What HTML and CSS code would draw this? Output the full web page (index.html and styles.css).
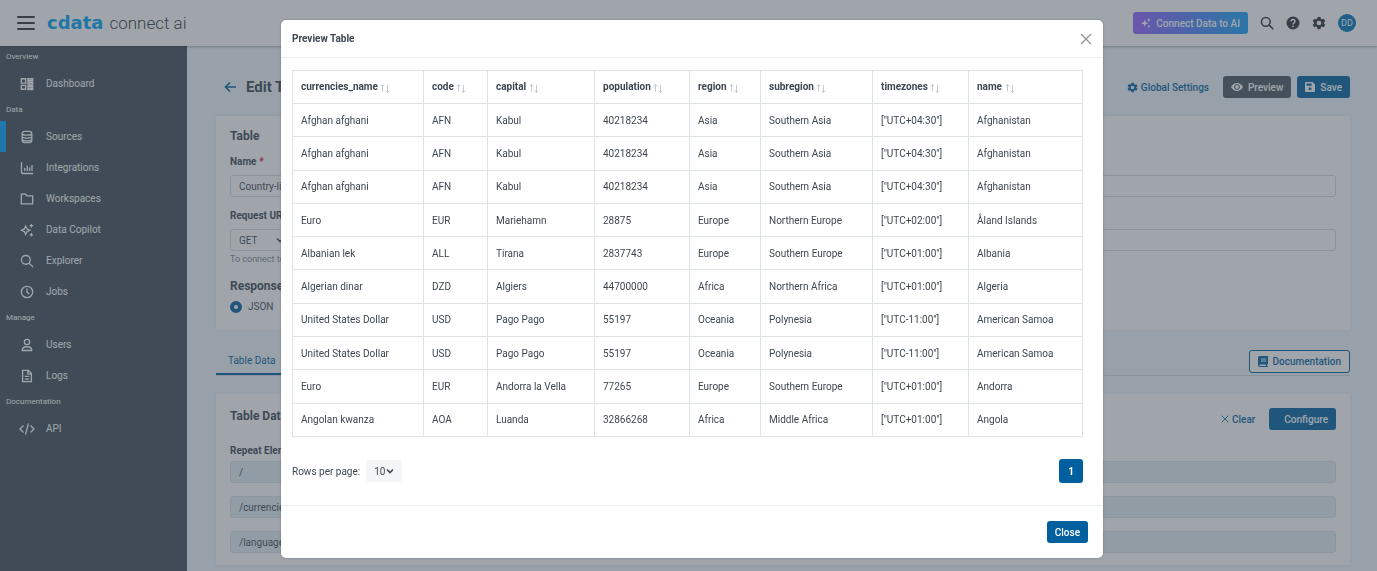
FILE: index.html
```
<!DOCTYPE html>
<html lang="en">
<head>
  <meta charset="UTF-8" />
  <meta name="viewport" content="width=device-width, initial-scale=1.0"/>
  <title>CData Connect AI</title>
  <link rel="stylesheet" href="styles.css">
</head>
<body>
  <!-- Shared icons -->
  <svg class="sprite" aria-hidden="true">
    <symbol id="i-gear" viewBox="0 0 24 24">
      <path fill="currentColor" fill-rule="evenodd" d="M9.5 1.5h5l.7 3.3 1.9 1.1 3.2-1.1 2.5 4.4-2.5 2.2v1.3l2.5 2.2-2.5 4.4-3.2-1.1-1.9 1.1-.7 3.2h-5l-.7-3.2-1.9-1.1-3.2 1.1-2.5-4.4 2.5-2.2v-1.3l-2.5-2.2 2.5-4.4 3.2 1.1 1.9-1.1zM12 8a4 4 0 1 0 0 8 4 4 0 0 0 0-8z"/>
    </symbol>
    <symbol id="i-search" viewBox="0 0 24 24">
      <g fill="none" stroke="currentColor" stroke-width="2.6" stroke-linecap="round"><circle cx="10" cy="10" r="7.5"/><path d="M15.6 15.6 22 22"/></g>
    </symbol>
    <symbol id="i-sort" viewBox="0 0 10 10">
      <path fill="none" stroke="currentColor" stroke-width=".9" d="M2.5 8.500V1.500M.8 3.200l1.700-1.700 1.700 1.700M7.500 2V9.500M5.800 7.800 7.500 9.500l1.700-1.700"/>
    </symbol>
    <symbol id="i-chevron" viewBox="0 0 8 8">
      <path fill="none" stroke="currentColor" stroke-width="1.6" d="m1 2.5 3 3 3-3"/>
    </symbol>
    <symbol id="i-x" viewBox="0 0 12 12">
      <path fill="none" stroke="currentColor" stroke-width="1.3" d="m1 1 10 10M11 1 1 11"/>
    </symbol>
  </svg>

  <header class="topbar">
    <button class="menu-btn" aria-label="Menu"><span></span><span></span><span></span></button>
    <a class="logo" href="#"><b>cdata</b> <span>connect ai</span></a>
    <div class="topbar-actions">
      <button class="btn btn-ai">
        <svg width="10" height="10" viewBox="0 0 24 24" fill="currentColor"><path d="m9 4 2.5 6L18 12.500l-6.500 2.500L9 21l-2.500-6L0 12.500 6.500 10zM19 0l1.300 3.200L23.500 4.500l-3.200 1.300L19 9l-1.300-3.200L14.500 4.500l3.200-1.300zM19 16l1.200 2.800L23 20l-2.800 1.200L19 24l-1.200-2.800L15 20l2.800-1.200z"/></svg>
        Connect Data to AI
      </button>
      <button class="icon-btn" aria-label="Search"><svg width="14" height="14"><use href="#i-search"/></svg></button>
      <button class="icon-btn" aria-label="Help">
        <svg width="14" height="14" viewBox="0 0 14 14"><circle cx="7" cy="7" r="6.500" fill="currentColor"/><path d="M5 5.500c0-2.600 4-2.600 4 0C9 7 7 6.900 7 8.400" fill="none" stroke="#fff" stroke-width="1.400"/><circle cx="7" cy="10.300" r=".9" fill="#fff"/></svg>
      </button>
      <button class="icon-btn" aria-label="Settings"><svg width="14" height="14"><use href="#i-gear"/></svg></button>
      <button class="avatar">DD</button>
    </div>
  </header>

  <div class="layout">
    <nav class="sidebar">
      <h2>Overview</h2>
      <a href="#">
        <svg viewBox="0 0 16 16"><path d="M1.500 2h5v5h-5zM1.500 9.500h5v4.500h-5zM9 2h5.500v2H9zM9 6h5.500v2H9zM9 9.800h5.500v1.500H9zM9 13h5.500v1.500H9z"/></svg>
        Dashboard
      </a>
      <h2>Data</h2>
      <a href="#" class="active">
        <svg viewBox="0 0 16 16"><rect x="2.500" y="1.500" width="11" height="13" rx="3"/><path d="M2.500 5c2 1.200 9 1.200 11 0M2.500 8.300c2 1.200 9 1.200 11 0M2.500 11.500c2 1.200 9 1.200 11 0"/></svg>
        Sources
      </a>
      <a href="#">
        <svg viewBox="0 0 16 16"><path d="M1.700 1.500V13c0 .8.500 1.300 1.300 1.300h12M5.500 8v3.500M8.300 5.500v6M11 7.500v4M13.700 4.500v7"/></svg>
        Integrations
      </a>
      <a href="#">
        <svg viewBox="0 0 16 16"><path d="M1.500 2.500h4.700l1.600 2h6.700V13.500h-13z"/></svg>
        Workspaces
      </a>
      <a href="#">
        <svg viewBox="0 0 16 16"><path d="m6.500 3.500 1.500 3.300L11.300 8.300 8 9.800l-1.500 3.300L5 9.800 1.700 8.300 5 6.800zM13 1v4M11 3h4M13 11.500v4M11 13.500h4"/></svg>
        Data Copilot
      </a>
      <a href="#">
        <svg viewBox="0 0 16 16"><circle cx="6.700" cy="6.700" r="5"/><path d="m10.500 10.500 4.500 4.500"/></svg>
        Explorer
      </a>
      <a href="#">
        <svg viewBox="0 0 16 16"><circle cx="8" cy="8" r="6.500"/><path d="M8 4v4.300l2.800 1.800"/></svg>
        Jobs
      </a>
      <h2>Manage</h2>
      <a href="#">
        <svg viewBox="0 0 16 16"><circle cx="8" cy="4.500" r="3"/><path d="M2.500 14.300c0-5.700 11-5.700 11 0z"/></svg>
        Users
      </a>
      <a href="#">
        <svg viewBox="0 0 16 16"><path d="M3 1.500h6.500L13 5v9.500H3zM9 1.500V5.500h4M5.500 8.500h5M5.500 11.500h5"/></svg>
        Logs
      </a>
      <h2>Documentation</h2>
      <a href="#">
        <svg class="wide" viewBox="0 0 18 16"><path d="M5 4 1 8l4 4M13 4l4 4-4 4M10.700 1.500 7.300 14.500"/></svg>
        API
      </a>
    </nav>

    <main class="content">
      <div class="page-head">
        <a class="back" href="#" aria-label="Back"><svg width="12" height="12" viewBox="0 0 12 12"><path fill="none" stroke="currentColor" stroke-width="1.600" d="M12 6H1.500M6 1.500 1.500 6 6 10.500"/></svg></a>
        <h1>Edit Table</h1>
        <button class="btn btn-link"><svg width="11" height="11"><use href="#i-gear"/></svg>Global Settings</button>
        <button class="btn btn-dark"><svg width="12" height="12" viewBox="0 0 12 12"><path fill="currentColor" d="M0 6c3-5.500 9-5.500 12 0-3 5.500-9 5.500-12 0z"/><circle cx="6" cy="6" r="2.400" fill="none" stroke="#4d545d"/></svg>Preview</button>
        <button class="btn btn-primary"><svg width="10" height="10" viewBox="0 0 10 10"><path fill="currentColor" fill-rule="evenodd" d="M1 0h6.500L10 2.500V9a1 1 0 0 1-1 1H1a1 1 0 0 1-1-1V1a1 1 0 0 1 1-1zm.5 1.500v2.200h5.200V1.500zM5 5.300a1.500 1.500 0 1 0 0 3 1.500 1.500 0 0 0 0-3z"/></svg>Save</button>
      </div>

      <section class="card">
        <h3>Table</h3>
        <label for="name">Name <em>*</em></label>
        <input id="name" type="text" value="Country-list">
        <label for="url">Request URL</label>
        <div class="url-row">
          <span class="select-wrap">
            <select aria-label="Method"><option>GET</option><option>POST</option></select>
            <svg width="8" height="8"><use href="#i-chevron"/></svg>
          </span>
          <input id="url" type="text">
        </div>
        <p class="hint">To connect to</p>
        <h3>Response</h3>
        <label class="radio"><input type="radio" name="format" checked>JSON</label>
      </section>

      <div class="tabs">
        <a class="tab" href="#">Table Data</a>
        <button class="btn btn-outline"><svg width="10" height="11" viewBox="0 0 10 11"><path fill="currentColor" fill-rule="evenodd" d="M2 0h8v8.500H9V10h1v1H2a2 2 0 0 1-2-2V2a2 2 0 0 1 2-2zm1 2.500v1h5v-1zm0 2v1h5v-1zM2 8.500a.7.700 0 0 0 0 1.500h6V8.500z"/></svg>Documentation</button>
      </div>

      <section class="card">
        <div class="card-head">
          <h3>Table Data</h3>
          <button class="btn btn-link"><svg width="8" height="8"><use href="#i-x"/></svg>Clear</button>
          <button class="btn btn-configure">Configure</button>
        </div>
        <label for="repeat">Repeat Elements</label>
        <div class="paths">
          <input id="repeat" type="text" value="/" disabled>
          <input type="text" value="/currencies" aria-label="Repeat element 2" disabled>
          <input type="text" value="/languages" aria-label="Repeat element 3" disabled>
        </div>
      </section>
    </main>
  </div>

  <!-- Preview dialog -->
  <div class="backdrop">
    <div class="modal" role="dialog" aria-labelledby="modal-title">
      <div class="modal-header">
        <h2 id="modal-title">Preview Table</h2>
        <button class="close-x" aria-label="Close dialog"><svg width="12" height="12"><use href="#i-x"/></svg></button>
      </div>
      <div class="modal-body">
        <table id="preview-table">
          <colgroup>
            <col class="c-currency"><col class="c-code"><col class="c-capital"><col class="c-population">
            <col class="c-region"><col class="c-subregion"><col class="c-timezones"><col>
          </colgroup>
          <thead><tr></tr></thead>
          <tbody></tbody>
        </table>
        <div class="pager">
          <label for="rows">Rows per page:</label>
          <span class="select-wrap">
            <select id="rows"><option>10</option><option>25</option></select>
            <svg width="8" height="8"><use href="#i-chevron"/></svg>
          </span>
          <button class="page-btn">1</button>
        </div>
      </div>
      <div class="modal-footer">
        <button class="btn btn-primary">Close</button>
      </div>
    </div>
  </div>

  <script src="script.js"></script>
</body>
</html>
```
FILE: styles.css
```
* {
  box-sizing: border-box;
}
body {
  margin: 0;
  height: 100vh;
  overflow: hidden;
  display: flex;
  flex-direction: column;
  font-family: Roboto, "Liberation Sans", sans-serif;
  font-size: 10px;
  color: #3f4650;
  background-color: #f0f5fa;
}
h1, h2, h3, p {
  margin: 0;
}
a {
  color: inherit;
  text-decoration: none;
}
button, input, select {
  font: inherit;
  color: inherit;
  margin: 0;
}
button {
  border: 0;
  padding: 0;
  background: none;
}
.sprite {
  position: absolute;
  width: 0;
  height: 0;
}

/* Top bar */
.topbar {
  flex: none;
  height: 46px;
  display: flex;
  align-items: center;
  padding: 0 21px 0 17px;
  background-color: #fff;
  box-shadow: 0 1px 2px rgba(0, 0, 0, 0.3);
  z-index: 1;
}
.menu-btn {
  display: grid;
  gap: 4px;
  width: 18px;
}
.menu-btn span {
  height: 2px;
  border-radius: 1px;
  background-color: #333;
}
.logo {
  display: flex;
  align-items: baseline;
  gap: 6px;
  margin-left: 12px;
}
.logo b {
  font-family: "DejaVu Sans", sans-serif;
  font-size: 18px;
  line-height: 22px;
  color: #00a0f0;
}
.logo span {
  font-size: 17px;
  font-weight: 300;
  color: #33373c;
}
.topbar-actions {
  display: flex;
  align-items: center;
  gap: 12px;
  margin-left: auto;
}
.icon-btn {
  height: 14px;
  color: #2c3036;
}
.icon-btn svg {
  display: block;
}
.avatar {
  width: 18px;
  height: 18px;
  border-radius: 50%;
  background-color: #0072b8;
  color: #fff;
  font-size: 9px;
}

/* Buttons */
.btn {
  display: flex;
  align-items: center;
  justify-content: center;
  gap: 5px;
  height: 22px;
  padding: 0 8px;
  border-radius: 3px;
  font-weight: 500;
  white-space: nowrap;
}
.btn-ai {
  color: #fff;
  background: linear-gradient(90deg, #9660ff, #14a0f5);
}
.btn-link {
  gap: 3px;
  color: #00609f;
}
.btn-dark {
  background-color: #4d545d;
  color: #fff;
}
.btn-primary {
  background-color: #00609f;
  color: #fff;
}
.btn-outline {
  height: 23px;
  border: 1px solid #00609f;
  color: #00609f;
  background-color: #fff;
}
.btn-configure {
  padding-left: 15px;
  background-color: #00609f;
  color: #fff;
}

/* Sidebar */
.layout {
  flex: 1;
  display: flex;
  min-height: 0;
}
.sidebar {
  flex: none;
  width: 187px;
  background-color: #404b56;
  color: #fff;
}
.sidebar h2 {
  padding-left: 6px;
  font-size: 8px;
  font-weight: 400;
  line-height: 22px;
}
.sidebar a {
  display: flex;
  align-items: center;
  gap: 12px;
  height: 31px;
  padding-left: 14px;
  border-left: 6px solid transparent;
}
.sidebar a.active {
  border-left-color: #00a2ff;
}
.sidebar svg {
  width: 14px;
  height: 14px;
  fill: none;
  stroke: currentColor;
  stroke-width: 1.5;
}
.sidebar svg.wide {
  width: 18px;
  margin: 0 -2px;
}

/* Page */
.content {
  flex: 1;
  min-width: 0;
  padding: 30px 27px 0 29px;
}
.page-head {
  display: flex;
  align-items: center;
  gap: 6px;
  height: 22px;
}
.page-head h1 {
  margin-right: auto;
  font-size: 15px;
}
.page-head .back {
  display: flex;
  margin: 0 4px 0 8px;
  color: #00609f;
}
.card {
  margin-top: 18px;
  padding: 12px 14px;
  background-color: #fff;
  box-shadow: 0 0 4px rgba(0, 0, 0, 0.06);
}
.card h3 {
  font-size: 12px;
  line-height: 16px;
}
.card label {
  display: block;
  font-weight: 700;
  line-height: 16px;
}
.card > label {
  margin: 10px 0 5px;
}
.card > input + label {
  margin-top: 11px;
}
.card em {
  color: #e0003c;
}
.card input[type="text"], .card select {
  display: block;
  width: 100%;
  height: 22px;
  padding: 0 8px;
  border: 1px solid #d5dadf;
  border-radius: 3px;
  background-color: #fff;
}
.card input[type="text"]:disabled {
  border-color: #dbe1e6;
  background-color: #e5edf2;
}
.url-row {
  display: grid;
  grid-template-columns: 62px 1fr;
  gap: 6px;
}
.select-wrap {
  position: relative;
}
.select-wrap select {
  appearance: none;
}
.select-wrap svg {
  position: absolute;
  top: 7px;
  right: 8px;
  pointer-events: none;
}
.hint {
  margin-bottom: 11px;
  font-size: 9px;
  line-height: 16px;
  color: #7c8590;
}
.card .radio {
  display: flex;
  align-items: center;
  gap: 6px;
  margin: 5px 0 3px;
  font-weight: 400;
}
.radio input {
  appearance: none;
  width: 12px;
  height: 12px;
  border: 4px solid #00609f;
  border-radius: 50%;
}
.tabs {
  display: flex;
  align-items: flex-end;
  justify-content: space-between;
  margin-top: 20px;
  border-bottom: 1px solid #d5dadf;
}
.tab {
  padding: 0 12px 7px;
  border-bottom: 2px solid #00609f;
  color: #00609f;
}
.tabs .btn {
  margin-bottom: 2px;
}
.card-head {
  display: flex;
  align-items: center;
  gap: 6px;
  height: 26px;
}
.card-head h3 {
  flex: 1;
  margin-bottom: 6px;
}
.card .card-head + label {
  margin: 11px 0 2px;
}
.paths {
  display: grid;
  gap: 13px;
}

/* Dialog */
.backdrop {
  position: fixed;
  inset: 0;
  z-index: 2;
  padding: 20px 0 0 7px;
  background-color: rgba(64, 76, 88, 0.5);
}
.modal {
  max-width: 822px;
  margin: 0 auto;
  border-radius: 5px;
  background-color: #fff;
  box-shadow: 0 0 2px rgba(0, 0, 0, 0.3);
}
.modal-header {
  display: flex;
  align-items: center;
  justify-content: space-between;
  height: 38px;
  padding: 0 11px;
  border-bottom: 1px solid #e9ecef;
}
.modal-header h2 {
  font-size: 10px;
}
.close-x {
  height: 12px;
  color: #8f959b;
}
.modal-body {
  padding: 12px 20px 22px 11px;
}
#preview-table {
  width: 100%;
  height: 367px;
  table-layout: fixed;
  border-collapse: collapse;
}
#preview-table th, #preview-table td {
  height: 33px;
  padding: 0 8px;
  border: 1px solid #dee3e6;
  text-align: left;
  white-space: nowrap;
}
#preview-table th svg {
  vertical-align: -3px;
  color: #bfc4c8;
}
.c-currency { width: 131px; }
.c-code { width: 64px; }
.c-capital { width: 107px; }
.c-population { width: 95px; }
.c-region { width: 71px; }
.c-subregion { width: 112px; }
.c-timezones { width: 96px; }
.pager {
  display: flex;
  align-items: center;
  gap: 6px;
  margin-top: 22px;
}
.pager select {
  display: block;
  width: 36px;
  height: 22px;
  padding: 0 8px;
  border: 0;
  border-radius: 3px;
  background-color: #f3f5f7;
}
.pager .page-btn {
  width: 24px;
  height: 24px;
  margin-left: auto;
  border-radius: 3px;
  background-color: #00609f;
  color: #fff;
  font-weight: 700;
}
.modal-footer {
  display: flex;
  justify-content: flex-end;
  padding: 15px;
  border-top: 1px solid #e9ecef;
}
```
FILE: script.js
```
const columns = ['currencies_name', 'code', 'capital', 'population', 'region', 'subregion', 'timezones', 'name'];

const rows = [
  ['Afghan afghani', 'AFN', 'Kabul', '40218234', 'Asia', 'Southern Asia', '["UTC+04:30"]', 'Afghanistan'],
  ['Afghan afghani', 'AFN', 'Kabul', '40218234', 'Asia', 'Southern Asia', '["UTC+04:30"]', 'Afghanistan'],
  ['Afghan afghani', 'AFN', 'Kabul', '40218234', 'Asia', 'Southern Asia', '["UTC+04:30"]', 'Afghanistan'],
  ['Euro', 'EUR', 'Mariehamn', '28875', 'Europe', 'Northern Europe', '["UTC+02:00"]', 'Åland Islands'],
  ['Albanian lek', 'ALL', 'Tirana', '2837743', 'Europe', 'Southern Europe', '["UTC+01:00"]', 'Albania'],
  ['Algerian dinar', 'DZD', 'Algiers', '44700000', 'Africa', 'Northern Africa', '["UTC+01:00"]', 'Algeria'],
  ['United States Dollar', 'USD', 'Pago Pago', '55197', 'Oceania', 'Polynesia', '["UTC-11:00"]', 'American Samoa'],
  ['United States Dollar', 'USD', 'Pago Pago', '55197', 'Oceania', 'Polynesia', '["UTC-11:00"]', 'American Samoa'],
  ['Euro', 'EUR', 'Andorra la Vella', '77265', 'Europe', 'Southern Europe', '["UTC+01:00"]', 'Andorra'],
  ['Angolan kwanza', 'AOA', 'Luanda', '32866268', 'Africa', 'Middle Africa', '["UTC+01:00"]', 'Angola']
];

const sortIcon = '<svg width="10" height="10"><use href="#i-sort"/></svg>';

document.querySelector('#preview-table thead tr').innerHTML =
  columns.map(name => `<th>${name} ${sortIcon}</th>`).join('');

document.querySelector('#preview-table tbody').innerHTML =
  rows.map(row => `<tr>${row.map(cell => `<td>${cell}</td>`).join('')}</tr>`).join('');
```
